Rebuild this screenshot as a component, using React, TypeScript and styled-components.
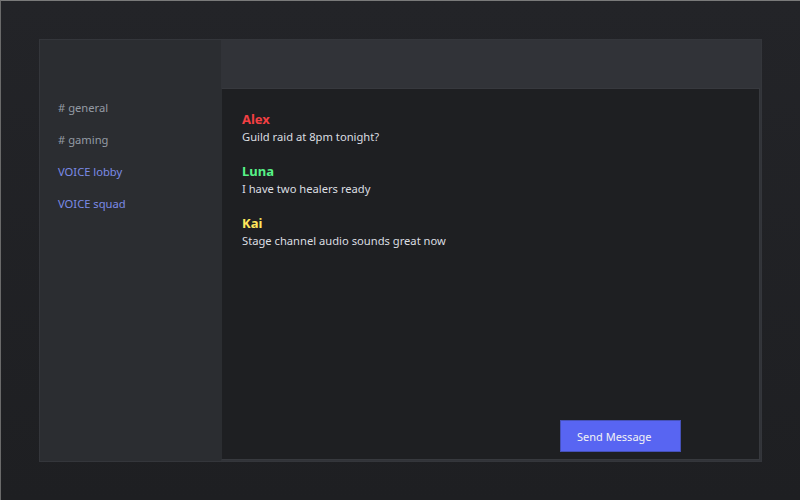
import styled, { createGlobalStyle } from 'styled-components';

const GlobalStyle = createGlobalStyle`
  html, body {
    margin: 0;
    padding: 0;
    height: 100%;
  }
  body {
    font-family: "Noto Sans", "Open Sans", sans-serif;
  }
  #root {
    height: 100%;
  }
`;

type Channel = { label: string; voice?: boolean };
type Message = { author: string; color: string; text: string };

const channels: Channel[] = [
  { label: '# general' },
  { label: '# gaming' },
  { label: 'VOICE lobby', voice: true },
  { label: 'VOICE squad', voice: true },
];

const messages: Message[] = [
  { author: 'Alex', color: '#f23f43', text: 'Guild raid at 8pm tonight?' },
  { author: 'Luna', color: '#57f287', text: 'I have two healers ready' },
  { author: 'Kai', color: '#fee75c', text: 'Stage channel audio sounds great now' },
];

const App = () => {
  return (
    <Page>
      <GlobalStyle />
      <Panel>
        <Sidebar>
          <ChannelList>
            {channels.map((c) => (
              <ChannelItem key={c.label} $voice={c.voice}>{c.label}</ChannelItem>
            ))}
          </ChannelList>
        </Sidebar>

        <Main>
          <TopBar />
          <Chat>
            <MessageList>
              {messages.map((m) => (
                <MessageRow key={m.author}>
                  <Author $color={m.color}>{m.author}</Author>
                  <Body>{m.text}</Body>
                </MessageRow>
              ))}
            </MessageList>
            <Composer>
              <SendButton>Send Message</SendButton>
            </Composer>
          </Chat>
        </Main>
      </Panel>
    </Page>
  );
};

export default App;

const Page = styled.div`
  box-sizing: border-box;
  height: 100%;
  padding: 38px;
  background: linear-gradient(#232428, #1e1f22);
  border-top: 1px solid #7a7a7a;
  border-left: 1px solid #6a6a6a;
`;

const Panel = styled.div`
  box-sizing: border-box;
  height: 423px;
  display: flex;
  background: #2b2d31;
  border: 1px solid #34363b;
`;

const Sidebar = styled.aside`
  width: 181px;
  flex-shrink: 0;
  padding-top: 59px;
`;

const ChannelList = styled.ul`
  list-style: none;
  margin: 0;
  padding: 0 0 0 18px;
  display: flex;
  flex-direction: column;
  gap: 14px;
`;

const ChannelItem = styled.li<{ $voice?: boolean }>`
  font-size: 11.2px;
  line-height: 18px;
  color: ${(p) => (p.$voice ? '#7b8be6' : '#949ba4')};
`;

const Main = styled.section`
  flex: 1;
  display: flex;
  flex-direction: column;
  background: #313338;
`;

const TopBar = styled.header`
  height: 48px;
  flex-shrink: 0;
`;

const Chat = styled.div`
  flex: 1;
  display: flex;
  flex-direction: column;
  background: #1e1f22;
  border: 1px solid #37393e;
  border-left-color: #2b2d31;
  margin: 0 1px 1px 0;
  padding: 21px 20px 7px 20px;
`;

const MessageList = styled.div`
  flex: 1;
  display: flex;
  flex-direction: column;
  gap: 16px;
`;

const MessageRow = styled.div`
  display: flex;
  flex-direction: column;
`;

const Author = styled.span<{ $color: string }>`
  font-size: 13px;
  font-weight: 700;
  line-height: 18px;
  color: ${(p) => p.$color};
`;

const Body = styled.span`
  font-size: 11.2px;
  line-height: 18px;
  color: #dbdee1;
`;

const Composer = styled.div`
  display: flex;
  justify-content: flex-end;
  padding-right: 58px;
`;

const SendButton = styled.button`
  box-sizing: border-box;
  width: 121px;
  height: 32px;
  padding: 0 0 0 16px;
  text-align: left;
  font-family: "Noto Sans", "Open Sans", sans-serif;
  font-size: 11px;
  color: #f2f3f5;
  background: #5865f2;
  border: 1px solid #4651b8;
  border-radius: 0;
  cursor: pointer;
`;
